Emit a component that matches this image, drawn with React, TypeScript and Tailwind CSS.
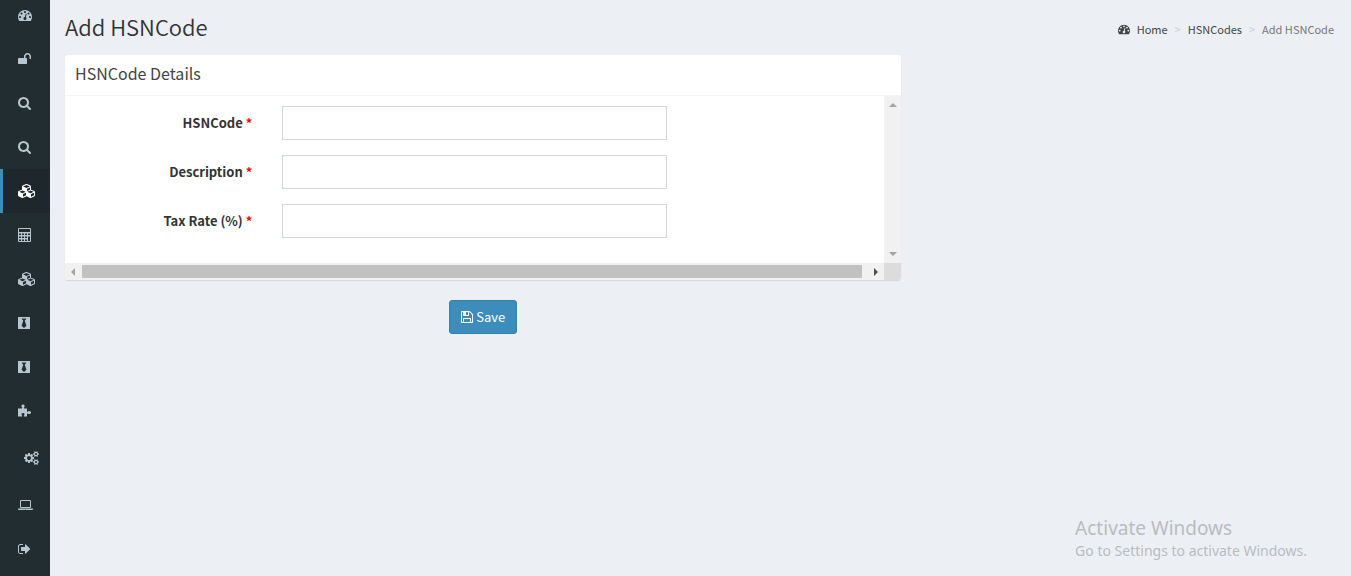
import { useState } from "react";
import { FaBlackTie } from "react-icons/fa";

type IconProps = { className?: string };

const TachometerIcon = ({ className = "h-3.5 w-3.5" }: IconProps) => (
  <svg viewBox="0 0 1792 1792" fill="currentColor" className={className} aria-hidden="true">
    <path d="M384 1152q0-53-37.5-90.5t-90.5-37.5-90.5 37.5-37.5 90.5 37.5 90.5 90.5 37.5 90.5-37.5 37.5-90.5zm192-448q0-53-37.5-90.5t-90.5-37.5-90.5 37.5-37.5 90.5 37.5 90.5 90.5 37.5 90.5-37.5 37.5-90.5zm428 481l101-382q6-26-7.5-48.5t-38.5-29.5-48 6.5-30 39.5l-101 382q-60 5-107 43.5t-63 98.5q-20 77 20 146t117 89 146-20 89-117q16-60-6-117t-72-91zm660-33q0-53-37.5-90.5t-90.5-37.5-90.5 37.5-37.5 90.5 37.5 90.5 90.5 37.5 90.5-37.5 37.5-90.5zm-640-640q0-53-37.5-90.5t-90.5-37.5-90.5 37.5-37.5 90.5 37.5 90.5 90.5 37.5 90.5-37.5 37.5-90.5zm448 192q0-53-37.5-90.5t-90.5-37.5-90.5 37.5-37.5 90.5 37.5 90.5 90.5 37.5 90.5-37.5 37.5-90.5zm320 448q0 261-141 483-19 29-54 29h-1402q-35 0-54-29-141-221-141-483 0-182 71-348t191-286 286-191 348-71 348 71 286 191 191 286 71 348z" />
  </svg>
);

const UnlockIcon = () => (
  <svg viewBox="64 0 1664 1792" fill="currentColor" className="h-3.5 w-[13px]" aria-hidden="true">
    <path d="M1728 576v256q0 26-19 45t-45 19h-64q-26 0-45-19t-19-45v-256q0-106-75-181t-181-75-181 75-75 181v192h96q40 0 68 28t28 68v576q0 40-28 68t-68 28h-960q-40 0-68-28t-28-68v-576q0-40 28-68t68-28h672v-192q0-185 131.5-316.5t316.5-131.5 316.5 131.5 131.5 316.5z" />
  </svg>
);

const SearchIcon = () => (
  <svg viewBox="64 0 1664 1792" fill="currentColor" className="h-3.5 w-[13px]" aria-hidden="true">
    <path d="M1216 832q0-185-131.5-316.5t-316.5-131.5-316.5 131.5-131.5 316.5 131.5 316.5 316.5 131.5 316.5-131.5 131.5-316.5zm512 832q0 52-38 90t-90 38q-54 0-90-38l-343-342q-179 124-399 124-143 0-273.5-55.5t-225-150-150-225-55.5-273.5 55.5-273.5 150-225 225-150 273.5-55.5 273.5 55.5 225 150 150 225 55.5 273.5q0 220-124 399l343 343q37 37 37 90z" />
  </svg>
);

const CubesIcon = () => (
  <svg viewBox="0 0 2304 1792" fill="currentColor" className="h-3.5 w-[18px]" aria-hidden="true">
    <path d="M640 1632l384-192v-314l-384 164v342zm-64-454l404-173-404-173-404 173zm1088 454l384-192v-314l-384 164v342zm-64-454l404-173-404-173-404 173zm-448-293l384-165v-266l-384 164v267zm-64-379l441-189-441-189-441 189zm1088 518v416q0 36-19 67t-52 47l-448 224q-25 14-57 14t-57-14l-448-224q-4-2-7-4-2 2-7 4l-448 224q-25 14-57 14t-57-14l-448-224q-33-16-52-47t-19-67v-416q0-38 21.5-70t56.5-48l434-186v-400q0-38 21.5-70t56.5-48l448-192q23-10 50-10t50 10l448 192q35 16 56.5 48t21.5 70v400l434 186q36 16 57 48t21 70z" />
  </svg>
);

const CalculatorIcon = () => (
  <svg viewBox="0 0 13 14" fill="currentColor" fillRule="evenodd" className="h-3.5 w-[13px]" aria-hidden="true">
    <path d="M1 0h11q1 0 1 1v12q0 1-1 1H1q-1 0-1-1V1q0-1 1-1zM1 1v3h11V1zM1 5.5v1.5h2V5.5zM4 5.5v1.5h2V5.5zM7 5.5v1.5h2V5.5zM10 5.5v1.5h2V5.5zM1 8.5v1.5h2V8.5zM4 8.5v1.5h2V8.5zM7 8.5v1.5h2V8.5zM10 8.5v4.5h2V8.5zM1 11.5v1.5h2v-1.5zM4 11.5v1.5h2v-1.5zM7 11.5v1.5h2v-1.5z" />
  </svg>
);

const TieIcon = () => <FaBlackTie className="h-3.5 w-3" aria-hidden="true" />;

const PuzzleIcon = () => (
  <svg viewBox="0 0 13 14" fill="currentColor" className="h-3.5 w-[13px]" aria-hidden="true">
    <path d="M0 4.500h3.600q.7 0 .6-.7-.8-1-.8-1.900Q3.500.5 5 .5t1.600 1.400q0 .9-.8 1.900-.1.700.6.700H9v2.700q0 .6.600.5.700-.7 1.700-.7 1.700 0 1.700 1.500T11.300 10q-1 0-1.700-.6-.6-.1-.6.500V12.500H6.200q-.6 0-.4-.7.700-.7.700-1.500Q6.500 9 5 9t-1.500 1.300q0 .8.700 1.500.1.700-.5.700H0z" />
  </svg>
);

const CogsIcon = () => (
  <svg viewBox="0 0 1920 1792" fill="currentColor" className="h-3.5 w-4" aria-hidden="true">
    <path d="M832 896q0-106-75-181t-181-75-181 75-75 181 75 181 181 75 181-75 75-181zm768 512q0-52-38-90t-90-38-90 38-38 90q0 53 37.5 90.5t90.5 37.5 90.5-37.5 37.5-90.5zm0-1024q0-52-38-90t-90-38-90 38-38 90q0 53 37.5 90.5t90.5 37.5 90.5-37.5 37.5-90.5zm-384 421v185q0 10-7 19.5t-16 10.5l-155 24q-11 35-32 76 34 48 90 115 7 11 7 20 0 12-7 19-23 30-82.5 89.5t-78.5 59.5q-11 0-21-7l-115-90q-37 19-77 31-11 108-23 155-7 24-30 24h-186q-11 0-20-7.5t-10-17.5l-23-153q-34-10-75-31l-118 89q-7 7-20 7-11 0-21-8-144-133-144-160 0-9 7-19 10-14 41-53t47-61q-23-44-35-82l-152-24q-10-1-17-9.5t-7-19.5v-185q0-10 7-19.5t16-10.5l155-24q11-35 32-76-34-48-90-115-7-11-7-20 0-12 7-20 22-30 82-89t79-59q11 0 21 7l115 90q34-18 77-32 11-108 23-154 7-24 30-24h186q11 0 20 7.5t10 17.5l23 153q34 10 75 31l118-89q8-7 20-7 11 0 21 8 144 133 144 160 0 8-7 19-12 16-42 54t-45 60q23 48 34 82l152 23q10 2 17 10.5t7 19.5zm640 533v140q0 16-149 31-12 27-30 52 51 113 51 138 0 4-4 7-122 71-124 71-8 0-46-47t-52-68q-20 2-30 2t-30-2q-14 21-52 68t-46 47q-2 0-124-71-4-3-4-7 0-25 51-138-18-25-30-52-149-15-149-31v-140q0-16 149-31 13-29 30-52-51-113-51-138 0-4 4-7 4-2 35-20t59-34 30-16q8 0 46 46.5t52 67.5q20-2 30-2t30 2q51-71 92-112l6-2q4 0 124 70 4 3 4 7 0 25-51 138 17 23 30 52 149 15 149 31zm0-1024v140q0 16-149 31-12 27-30 52 51 113 51 138 0 4-4 7-122 71-124 71-8 0-46-47t-52-68q-20 2-30 2t-30-2q-14 21-52 68t-46 47q-2 0-124-71-4-3-4-7 0-25 51-138-18-25-30-52-149-15-149-31v-140q0-16 149-31 13-29 30-52-51-113-51-138 0-4 4-7 4-2 35-20t59-34 30-16q8 0 46 46.5t52 67.5q20-2 30-2t30 2q51-71 92-112l6-2q4 0 124 70 4 3 4 7 0 25-51 138 17 23 30 52 149 15 149 31z" />
  </svg>
);

const LaptopIcon = () => (
  <svg viewBox="0 0 1920 1792" fill="currentColor" className="h-3.5 w-[15px]" aria-hidden="true">
    <path d="M416 1280q-66 0-113-47t-47-113v-704q0-66 47-113t113-47h1088q66 0 113 47t47 113v704q0 66-47 113t-113 47h-1088zm-32-864v704q0 13 9.500 22.500t22.500 9.500h1088q13 0 22.500-9.500t9.500-22.500v-704q0-13-9.500-22.500t-22.500-9.500h-1088q-13 0-22.500 9.500t-9.500 22.500zm1376 928h160v96q0 40-47 68t-113 28h-1600q-66 0-113-28t-47-68v-96h1760zm-720 96q16 0 16-16t-16-16h-160q-16 0-16 16t16 16h160z" />
  </svg>
);

const SignOutIcon = () => (
  <svg viewBox="64 0 1664 1792" fill="currentColor" className="h-3.5 w-[13px]" aria-hidden="true">
    <path d="M704 1440q0 4 1 20t.5 26.5-3 23.5-10 19.5-20.5 6.5h-320q-119 0-203.5-84.5t-84.5-203.5v-704q0-119 84.5-203.5t203.5-84.5h320q13 0 22.500 9.500t9.500 22.500q0 4 1 20t.5 26.500-3 23.500-10 19.500-20.500 6.500h-320q-66 0-113 47t-47 113v704q0 66 47 113t113 47h312l11.500 1 11.500 3 8 5.500 7 9 2 13.500zm928-544q0 26-19 45l-544 544q-19 19-45 19t-45-19-19-45v-288h-448q-26 0-45-19t-19-45v-384q0-26 19-45t45-19h448v-288q0-26 19-45t45-19 45 19l544 544q19 19 19 45z" />
  </svg>
);

const SaveIcon = () => (
  <svg viewBox="128 0 1536 1792" fill="currentColor" className="h-3.5 w-3" aria-hidden="true">
    <path d="M512 1536h768v-384h-768v384zm896 0h128v-896q0-14-10-38.500t-20-34.500l-281-281q-10-10-34-20t-39-10v416q0 40-28 68t-68 28h-576q-40 0-68-28t-28-68v-416h-128v1280h128v-416q0-40 28-68t68-28h832q40 0 68 28t28 68v416zm-384-928v-320q0-13-9.500-22.500t-22.500-9.500h-192q-13 0-22.500 9.500t-9.500 22.500v320q0 13 9.500 22.500t22.500 9.500h192q13 0 22.500-9.500t9.500-22.500zm640 32v928q0 40-28 68t-68 28h-1344q-40 0-68-28t-28-68v-1344q0-40 28-68t68-28h928q40 0 88 20t76 48l280 280q28 28 48 76t20 88z" />
  </svg>
);

const MENU = [
  { label: "Dashboard", icon: TachometerIcon },
  { label: "Access", icon: UnlockIcon },
  { label: "Search", icon: SearchIcon },
  { label: "Advanced search", icon: SearchIcon },
  { label: "Masters", icon: CubesIcon, active: true },
  { label: "Accounts", icon: CalculatorIcon },
  { label: "Stock", icon: CubesIcon },
  { label: "Employees", icon: TieIcon },
  { label: "Customers", icon: TieIcon },
  { label: "Modules", icon: PuzzleIcon },
  { label: "Settings", icon: CogsIcon, nested: true },
  { label: "System", icon: LaptopIcon },
  { label: "Sign out", icon: SignOutIcon },
];

const FIELDS = [
  { id: "hsncode", label: "HSNCode" },
  { id: "description", label: "Description" },
  { id: "taxrate", label: "Tax Rate (%)" },
];

function Sidebar() {
  return (
    <aside className="w-[50px] shrink-0 overflow-hidden bg-[#222d32]">
      <nav className="-mt-[7px]">
        {MENU.map((m) => {
          const Icon = m.icon;
          return (
            <a
              key={m.label}
              href="#"
              aria-label={m.label}
              className={`flex items-center border-l-[3px] ${m.nested ? "h-[50px] pl-[21px]" : "h-11 pl-[15px]"} ${
                m.active ? "border-[#3c8dbc] bg-[#1e282c] text-white" : "border-transparent text-[#b8c7ce]"
              }`}
            >
              <Icon />
            </a>
          );
        })}
      </nav>
    </aside>
  );
}

export default function App() {
  const [values, setValues] = useState<Record<string, string>>({});

  return (
    <div className="relative flex min-h-screen bg-[#ecf0f5] font-['Noto_Sans_CJK_SC',sans-serif] text-[13px] leading-5 text-[#333]">
      <Sidebar />

      <main className="min-w-0 flex-1">
        <header className="flex items-start justify-between px-[15px] pt-[13px]">
          <h1 className="text-[22px] leading-[26px] font-[350]">Add HSNCode</h1>
          <nav aria-label="Breadcrumb" className="pt-1.5 pr-0.5">
            <ol className="flex items-center text-[11px] text-[#444]">
              <li>
                <a href="#" className="flex items-center gap-[7px]">
                  <TachometerIcon className="h-3 w-3" />
                  Home
                </a>
              </li>
              <li className="px-[7px] text-[#ccc]" aria-hidden="true">&gt;</li>
              <li>
                <a href="#">HSNCodes</a>
              </li>
              <li className="px-[7px] text-[#ccc]" aria-hidden="true">&gt;</li>
              <li className="text-[#777]">Add HSNCode</li>
            </ol>
          </nav>
        </header>

        <form className="w-2/3 pt-4 pr-4 pl-[15px]" onSubmit={(e) => e.preventDefault()}>
          <section className="overflow-hidden rounded-[3px] bg-white shadow-[0_1px_1px_rgba(0,0,0,0.1)]">
            <div className="border-b border-[#f4f4f4] px-2.5 pt-2 pb-3 text-[#444]">
              <h2 className="text-base leading-5 font-normal">HSNCode Details</h2>
            </div>

            <div className="flex">
              <div className="min-w-0 flex-1 overflow-hidden pt-2.5 pb-[25px]">
                <div className="-mx-[5px] flex flex-col gap-[15px]">
                  {FIELDS.map((f) => (
                    <div key={f.id} className="grid grid-cols-4">
                      <label htmlFor={f.id} className="px-[15px] pt-[7px] text-right font-bold">
                        {f.label} <span className="text-[#f00]">*</span>
                      </label>
                      <div className="col-span-2 px-[15px]">
                        <input
                          id={f.id}
                          type="text"
                          value={values[f.id] || ""}
                          onChange={(e) => setValues({ ...values, [f.id]: e.target.value })}
                          className="block h-[34px] w-full border border-[#d2d6de] bg-white px-3 outline-none"
                        />
                      </div>
                    </div>
                  ))}
                </div>
              </div>
              <div className="flex w-[17px] flex-col items-center justify-between bg-[#f1f1f1] py-[7px]">
                <span className="border-x-4 border-b-4 border-x-transparent border-b-[#a3a3a3]" />
                <span className="border-x-4 border-t-4 border-x-transparent border-t-[#a3a3a3]" />
              </div>
            </div>

            <div className="flex h-[17px]">
              <div className="flex flex-1 items-center bg-[#f1f1f1]">
                <span className="mx-1.5 border-y-4 border-r-4 border-y-transparent border-r-[#a3a3a3]" />
                <span className="ml-px h-[13px] flex-1 bg-[#c1c1c1]" />
                <span className="mr-1.5 ml-3 border-y-4 border-l-4 border-y-transparent border-l-[#505050]" />
              </div>
              <div className="w-[17px] bg-[#dcdcdc]" />
            </div>
          </section>

          <div className="flex justify-center pt-5">
            <button
              type="submit"
              className="flex h-[34px] items-center gap-[3px] rounded-[3px] border border-[#367fa9] bg-[#3c8dbc] px-[11px] text-white"
            >
              <SaveIcon />
              Save
            </button>
          </div>
        </form>
      </main>

      <div className="pointer-events-none absolute right-11 bottom-[15px] font-['Noto_Sans',sans-serif] text-[#b9bcc0]">
        <p className="text-[19px] leading-[25px]">Activate Windows</p>
        <p className="text-sm leading-5">Go to Settings to activate Windows.</p>
      </div>
    </div>
  );
}
